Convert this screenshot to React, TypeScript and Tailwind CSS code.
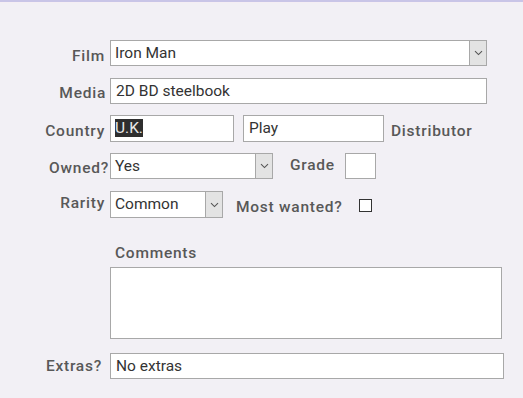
import { ReactNode } from 'react';

const font = { fontFamily: 'Roboto, "Liberation Sans", sans-serif' };

function Chevron() {
  return (
    <svg width="9" height="6" viewBox="0 0 9 6" fill="none">
      <path d="M1 1.2 L4.5 4.6 L8 1.2" stroke="#555" strokeWidth="1.1" />
    </svg>
  );
}

function Select({ value, width }: { value: string; width: string }) {
  return (
    <div className={`flex border border-[#a8a8a8] bg-white ${width}`}>
      <div className="flex-1 pl-[4px] pt-[1px] text-[15.5px] leading-[22px] text-[#333]">{value}</div>
      <div className="flex w-[17px] items-center justify-center border-l border-[#a8a8a8] bg-[#e3e3e3]">
        <Chevron />
      </div>
    </div>
  );
}

function Box({ children, className }: { children?: ReactNode; className: string }) {
  return (
    <div className={`border border-[#a8a8a8] bg-white pl-[5px] pt-[1px] text-[15.5px] leading-[22px] text-[#333] ${className}`}>
      {children}
    </div>
  );
}

// label text: Roboto medium, slightly spaced out
function Label({ children, className }: { children: ReactNode; className: string }) {
  return (
    <div className={`shrink-0 text-[15.5px] font-medium leading-[20px] tracking-[0.75px] text-[#585858] ${className}`}>
      {children}
    </div>
  );
}

export default function App() {
  return (
    <div className="min-h-screen bg-[#f2f0f5]" style={font}>
      <div className="h-[2px] bg-[#c9c5e7]" />
      <div className="h-[1px] bg-[#f5eef4]" />
      <div className="pt-[37px]">
        <div className="flex items-start">
          <Label className="w-[105px] pt-[6px] text-right">Film</Label>
          <div className="ml-[5px]">
            <Select value="Iron Man" width="w-[377px] h-[26px]" />
          </div>
        </div>

        <div className="mt-[12px] flex items-start">
          <Label className="w-[106px] pt-[5px] text-right">Media</Label>
          <Box className="ml-[4px] h-[26px] w-[377px]">2D BD steelbook</Box>
        </div>

        <div className="mt-[11px] flex items-start">
          <Label className="w-[105px] pt-[6px] text-right">Country</Label>
          <div className="ml-[5px] h-[27px] w-[124px] border border-[#a8a8a8] bg-white pl-[4px] pt-[3px] text-[15.5px] leading-[19px]">
            <span className="bg-[#2e2e2e] text-[#e8e8e8]">U.K.</span>
          </div>
          <Box className="ml-[9px] h-[27px] w-[141px]">Play</Box>
          <Label className="ml-[7px] pt-[6px]">Distributor</Label>
        </div>

        <div className="mt-[11px] flex items-start">
          <Label className="w-[109px] pt-[5px] text-right">Owned?</Label>
          <div className="ml-[1px]">
            <Select value="Yes" width="w-[163px] h-[26px]" />
          </div>
          <Label className="ml-[17px] w-[55px] pt-[2px]">Grade</Label>
          <Box className="h-[26px] w-[31px]" />
        </div>

        <div className="mt-[12px] flex items-start">
          <Label className="w-[105px] pt-[2px] text-right">Rarity</Label>
          <div className="ml-[5px]">
            <Select value="Common" width="w-[113px] h-[27px]" />
          </div>
          <Label className="ml-[13px] w-[123px] pt-[6px]">Most wanted?</Label>
          <div className="mt-[8px] h-[13px] w-[13px] border border-[#333] bg-white" />
        </div>

        <Label className="ml-[115px] mt-[25px]">Comments</Label>
        <div className="ml-[110px] mt-[4px] h-[72px] w-[392px] border border-[#a8a8a8] bg-white" />

        <div className="mt-[14px] flex items-start">
          <Label className="w-[102px] pt-[3px] text-right">Extras?</Label>
          <Box className="ml-[8px] h-[26px] w-[394px]">No extras</Box>
        </div>
      </div>
    </div>
  );
}
